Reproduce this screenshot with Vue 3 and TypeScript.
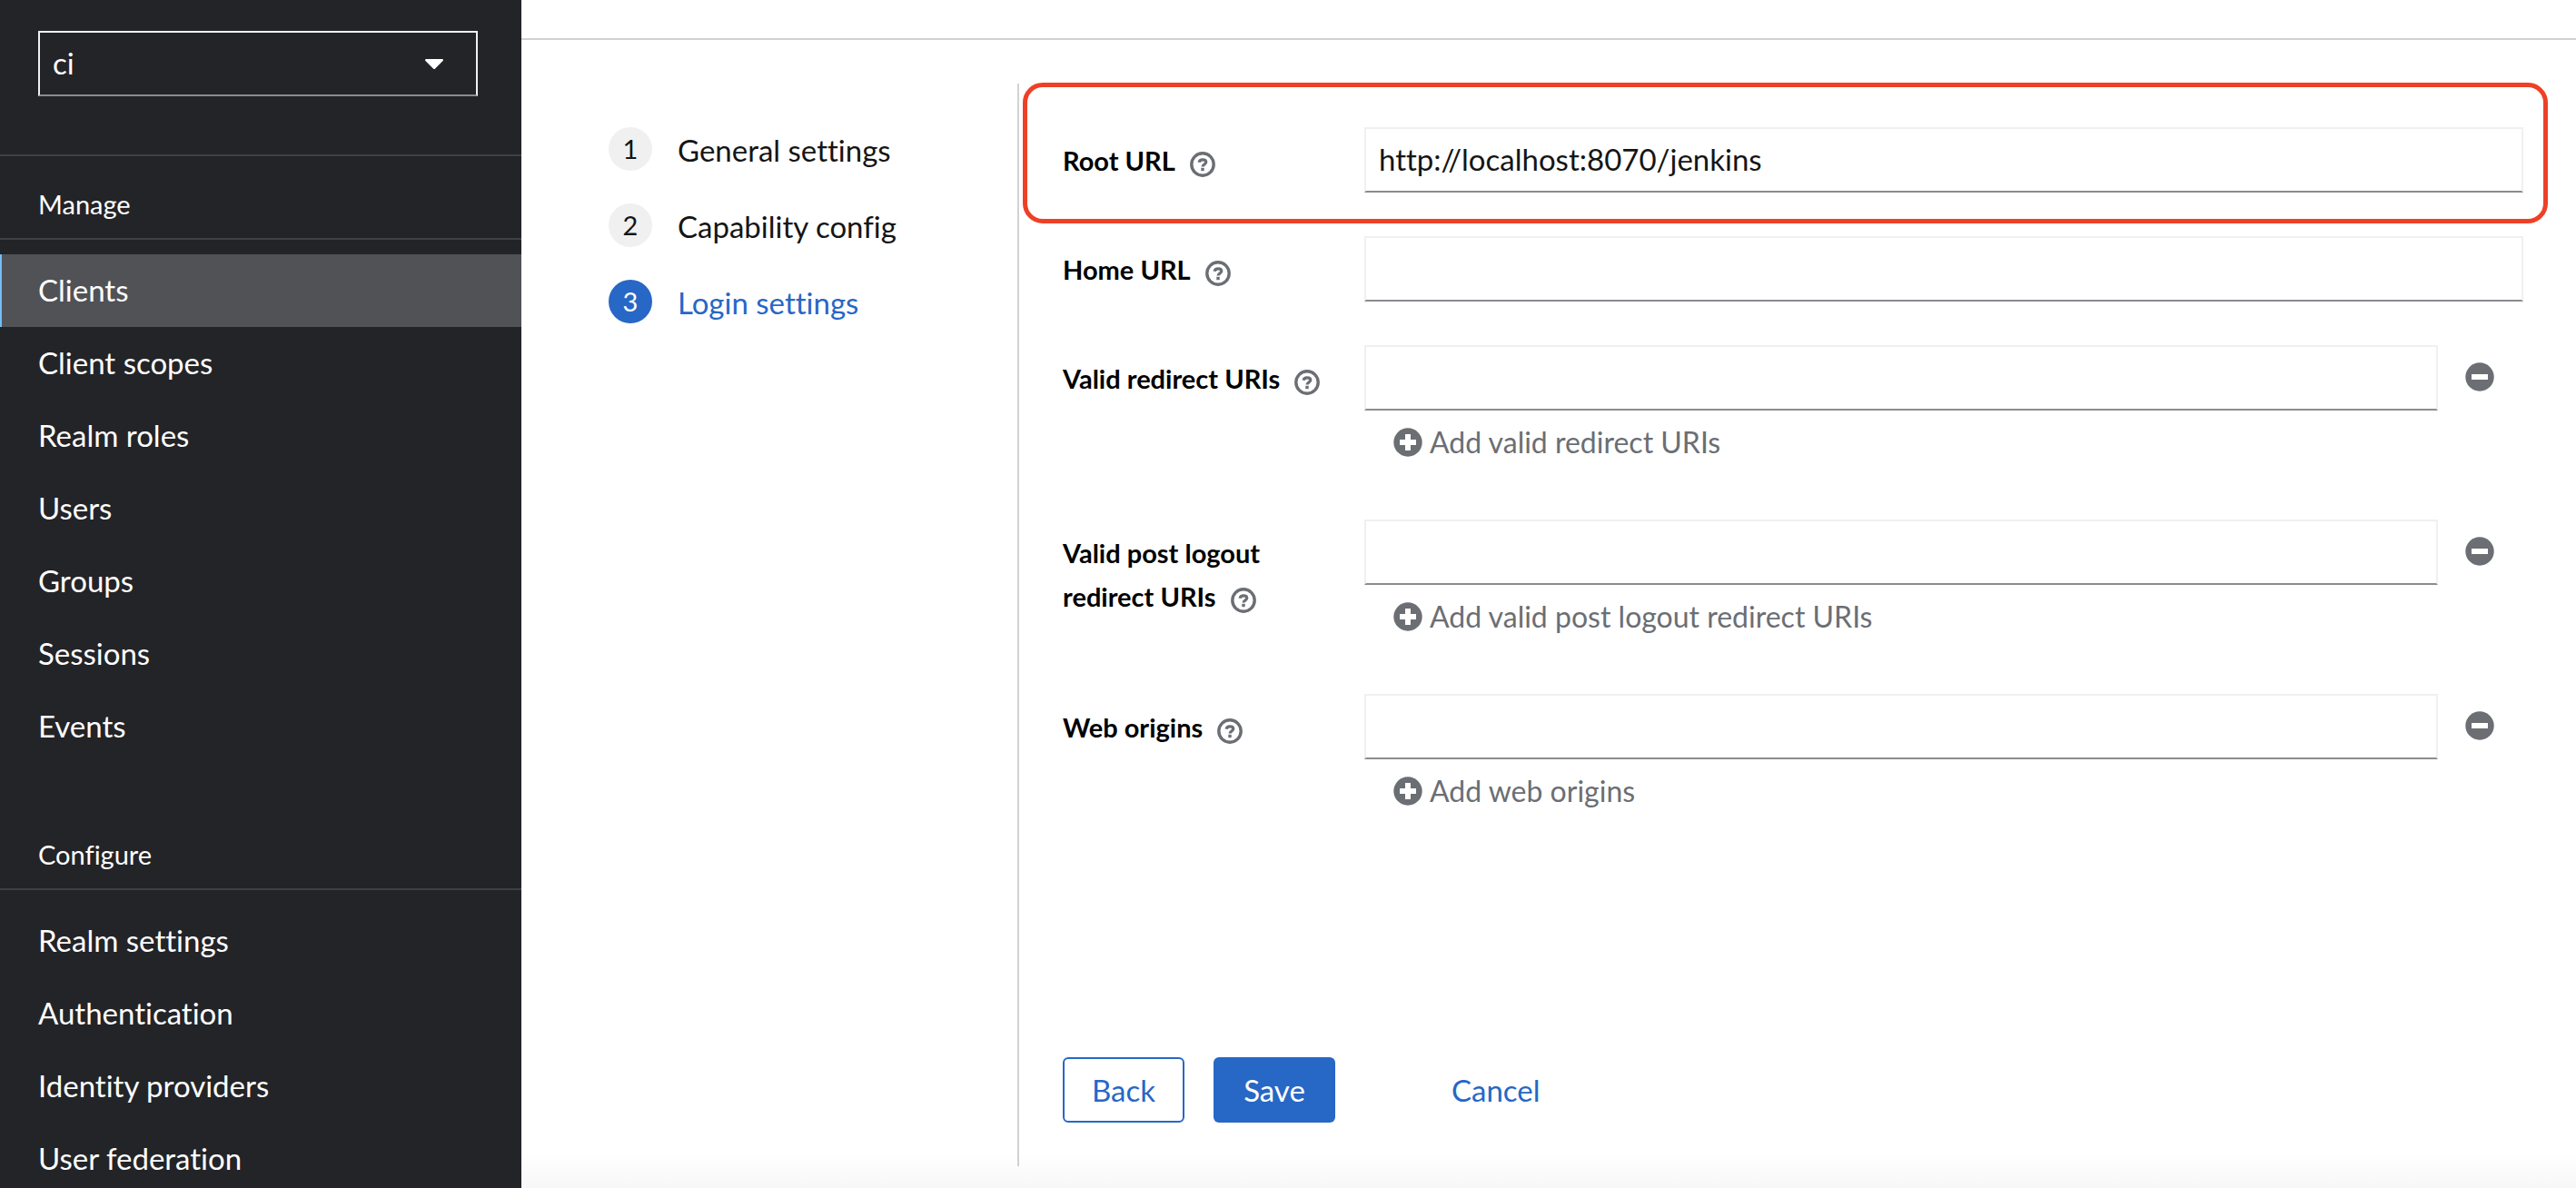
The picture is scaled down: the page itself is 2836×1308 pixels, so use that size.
<script setup lang="ts">
import { ref } from 'vue'

interface Group {
  title: string
  items: string[]
}

interface Field {
  id: string
  label: string
  multi: boolean
  highlighted: boolean
  addText?: string
}

const realm = ref('ci')
const activeItem = ref('Clients')
const currentStep = ref(3)

const groups: Group[] = [
  {
    title: 'Manage',
    items: ['Clients', 'Client scopes', 'Realm roles', 'Users', 'Groups', 'Sessions', 'Events'],
  },
  {
    title: 'Configure',
    items: ['Realm settings', 'Authentication', 'Identity providers', 'User federation'],
  },
]

const steps = ['General settings', 'Capability config', 'Login settings']

const fields: Field[] = [
  { id: 'root-url', label: 'Root URL', multi: false, highlighted: true },
  { id: 'home-url', label: 'Home URL', multi: false, highlighted: false },
  { id: 'redirect-uris', label: 'Valid redirect URIs', multi: true, highlighted: false, addText: 'Add valid redirect URIs' },
  { id: 'logout-uris', label: 'Valid post logout redirect URIs', multi: true, highlighted: false, addText: 'Add valid post logout redirect URIs' },
  { id: 'web-origins', label: 'Web origins', multi: true, highlighted: false, addText: 'Add web origins' },
]

const values = ref<Record<string, string>>({
  'root-url': 'http://localhost:8070/jenkins',
  'home-url': '',
  'redirect-uris': '',
  'logout-uris': '',
  'web-origins': '',
})
</script>

<template>
  <div class="page">
    <aside class="sidebar">
      <div class="realm">
        <select v-model="realm" class="realm-select" aria-label="Realm">
          <option value="ci">ci</option>
        </select>
        <svg class="caret" viewBox="0 0 20 12" aria-hidden="true">
          <path d="M1.2 0h17.6c1 0 1.5 1.2.8 1.9l-8.5 8.6c-.6.7-1.6.7-2.2 0L.4 1.9C-.3 1.2.2 0 1.2 0z" fill="#fff" />
        </svg>
      </div>
      <nav v-for="g in groups" :key="g.title" class="group">
        <h2 class="group-title">{{ g.title }}</h2>
        <ul class="group-list">
          <li v-for="item in g.items" :key="item">
            <a
              href="#"
              class="nav-link"
              :class="{ active: item === activeItem }"
              @click.prevent="activeItem = item"
            >{{ item }}</a>
          </li>
        </ul>
      </nav>
    </aside>

    <main class="main">
      <div class="top-rule"></div>
      <div class="wizard">
        <ol class="steps">
          <li v-for="(step, i) in steps" :key="step">
            <button
              type="button"
              class="step"
              :class="{ current: currentStep === i + 1 }"
              @click="currentStep = i + 1"
            >
              <span class="step-number">{{ i + 1 }}</span>
              <span class="step-text">{{ step }}</span>
            </button>
          </li>
        </ol>

        <form class="form" @submit.prevent>
          <div
            v-for="f in fields"
            :key="f.id"
            class="field"
            :class="{ multi: f.multi, highlighted: f.highlighted }"
          >
            <div class="field-label">
              <label :for="f.id">{{ f.label }}</label>
              <button type="button" class="help" :aria-label="`Help for ${f.label}`">
                <svg viewBox="0 0 28 28" fill="none" stroke="currentColor" aria-hidden="true">
                  <circle cx="14" cy="14" r="12.2" stroke-width="3.4" />
                  <path d="M10.1 11.8C10.5 9.8 12 8.9 14 8.9c2.3 0 3.8 1 3.8 2.7 0 2.3-3.7 2.1-3.7 4.9" stroke-width="3.2" />
                  <path d="M14 17.8v3.4" stroke-width="3.4" />
                </svg>
              </button>
            </div>
            <div class="field-control">
              <div class="input-row">
                <input :id="f.id" v-model="values[f.id]" type="text" class="text-input" />
                <button v-if="f.multi" type="button" class="remove" :aria-label="`Remove ${f.label}`">
                  <svg viewBox="0 0 32 32" aria-hidden="true">
                    <circle cx="16" cy="16" r="15.7" fill="currentColor" />
                    <rect x="7" y="13" width="18" height="6" fill="#fff" />
                  </svg>
                </button>
              </div>
              <button v-if="f.multi" type="button" class="add">
                <svg viewBox="0 0 32 32" aria-hidden="true">
                  <circle cx="16" cy="16" r="15.7" fill="currentColor" />
                  <path d="M13 7h6v6h6v6h-6v6h-6v-6H7v-6h6z" fill="#fff" />
                </svg>
                <span>{{ f.addText }}</span>
              </button>
            </div>
          </div>

          <div class="actions">
            <button type="button" class="btn secondary">Back</button>
            <button type="submit" class="btn primary">Save</button>
            <button type="button" class="btn link">Cancel</button>
          </div>
        </form>
      </div>
      <div class="bottom-shade"></div>
    </main>
  </div>
</template>

<style>
body {
  margin: 0;
}
</style>

<style scoped>
.page {
  display: flex;
  height: 100vh;
  overflow: hidden;
  background: #fff;
  color: #151515;
  font-family: Lato, "Liberation Sans", sans-serif;
  font-size: 33px;
  font-variant-ligatures: none;
  line-height: 48px;
}

.page *,
.page *::before {
  box-sizing: border-box;
}

button,
input,
select {
  font: inherit;
  font-variant-ligatures: none;
  color: inherit;
}

button {
  padding: 0;
  border: 0;
  background: none;
  cursor: pointer;
}

svg {
  display: block;
}

.sidebar {
  flex: 0 0 574px;
  overflow: hidden;
  background: #232428;
  color: #fff;
}

.realm {
  position: relative;
  padding: 34px 48px 64px 42px;
  border-bottom: 2px solid #3f4045;
}

.realm-select {
  display: block;
  width: 100%;
  height: 72px;
  padding: 0 14px 2px;
  border: 2px solid #f0f0f0;
  border-bottom-color: #8b8b90;
  border-radius: 0;
  background: transparent;
  appearance: none;
}

.caret {
  position: absolute;
  top: 65px;
  right: 86px;
  width: 20px;
  height: 12px;
  pointer-events: none;
}

.group + .group {
  margin-top: 48px;
}

.group-title {
  margin: 0;
  padding: 32px 42px 16px;
  border-bottom: 2px solid #3f4045;
  font-size: 29px;
  font-weight: 400;
  line-height: 42px;
}

.group-list {
  margin: 0;
  padding: 16px 0 0;
  list-style: none;
}

.nav-link {
  display: block;
  padding: 15px 40px 17px;
  border-left: 2px solid transparent;
  color: inherit;
  text-decoration: none;
}

.nav-link.active {
  border-left-color: #73bcf7;
  background: #515256;
}

.main {
  position: relative;
  flex: 1;
  min-width: 0;
  display: flex;
  flex-direction: column;
}

.top-rule {
  height: 44px;
  border-bottom: 2px solid #d2d2d2;
}

.wizard {
  flex: 1;
  display: flex;
  margin: 48px 0 24px;
}

.steps {
  flex: 0 0 546px;
  margin: 0;
  padding: 48px 0 0 96px;
  list-style: none;
}

.steps li + li {
  margin-top: 36px;
}

.step {
  display: flex;
  align-items: flex-start;
  gap: 28px;
  height: 48px;
  text-align: left;
}

.step-number {
  width: 48px;
  border-radius: 50%;
  background: #f0f0f0;
  font-size: 29px;
  text-align: center;
}

.step-text {
  padding-top: 1px;
}

.step.current {
  color: #2767c6;
}

.step.current .step-number {
  background: #2767c6;
  color: #fff;
}

.form {
  flex: 1;
  display: flex;
  flex-direction: column;
  padding: 48px 58px 48px 48px;
  border-left: 2px solid #d2d2d2;
}

.field {
  position: relative;
  display: flex;
  margin-bottom: 48px;
}

.field.multi {
  min-height: 144px;
}

.field.highlighted::before {
  content: "";
  position: absolute;
  inset: -49px -27px -34px -44px;
  border: 5px solid #ee4027;
  border-radius: 22px;
  pointer-events: none;
}

.field-label {
  flex: 0 0 332px;
  padding: 13px 32px 0 0;
  color: #000;
  font-size: 29px;
  font-weight: 700;
}

.help {
  width: 28px;
  height: 28px;
  margin-left: 16px;
  margin-right: -16px;
  color: #6b6e73;
  vertical-align: -7px;
}

.field-control {
  flex: 1;
  min-width: 0;
}

.input-row {
  display: flex;
}

.text-input {
  flex: 1;
  min-width: 0;
  height: 72px;
  padding: 0 14px 2px;
  border: 2px solid #f0f0f0;
  border-bottom-color: #8b8b90;
  border-radius: 0;
  background: #fff;
  outline: 0;
}

.remove {
  flex: 0 0 94px;
  padding: 0 32px 2px 30px;
  color: #6b6e73;
}

.add {
  display: flex;
  align-items: center;
  gap: 8px;
  margin: 11px 0 0 32px;
  color: #6b6e73;
  font-size: 32px;
}

.remove svg,
.add svg {
  width: 32px;
  height: 32px;
}

.actions {
  display: flex;
  margin-top: auto;
}

.btn {
  min-width: 134px;
  height: 72px;
  padding: 0 28px;
  border-radius: 6px;
}

.secondary {
  border: 2px solid #2767c6;
  color: #2767c6;
}

.primary {
  margin-left: 32px;
  background: #2767c6;
  color: #fff;
}

.link {
  margin-left: 100px;
  color: #2767c6;
}

.bottom-shade {
  position: absolute;
  right: 0;
  bottom: 0;
  left: 0;
  height: 40px;
  background: linear-gradient(rgba(0, 0, 0, 0), rgba(0, 0, 0, 0.03));
  pointer-events: none;
}
</style>
